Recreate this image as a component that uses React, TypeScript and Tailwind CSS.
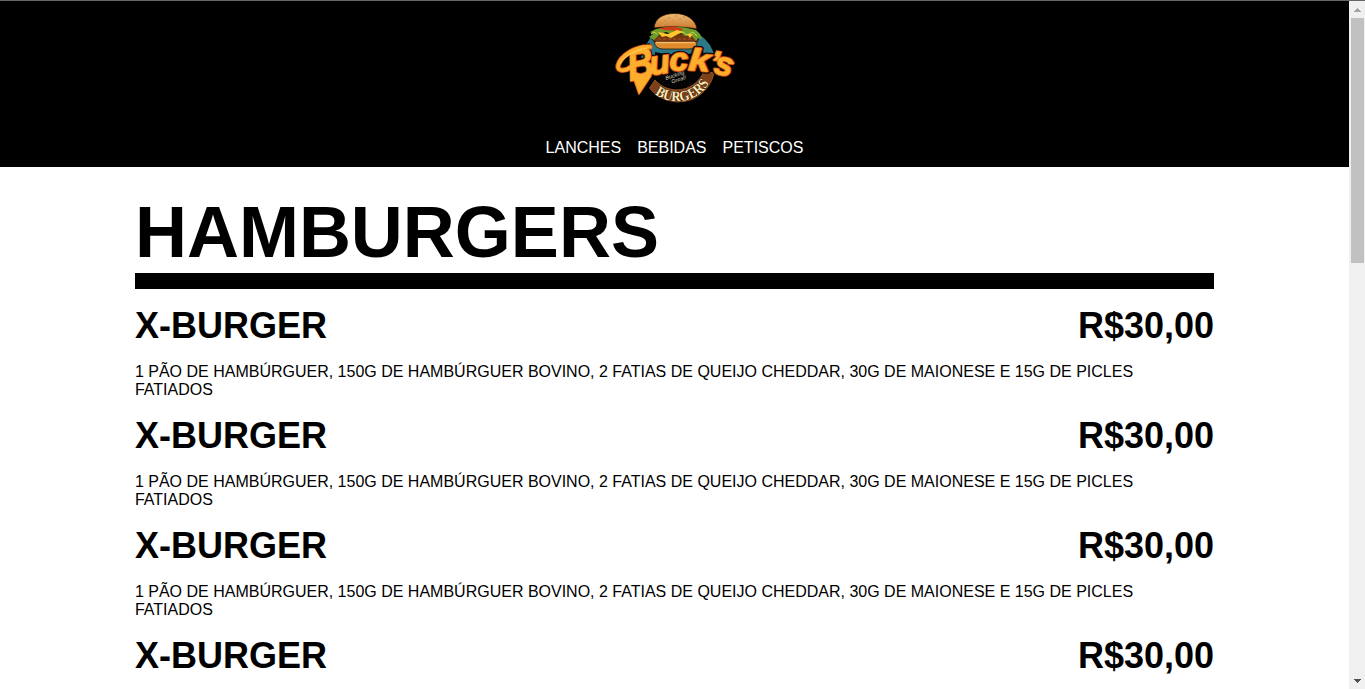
const links = ["LANCHES", "BEBIDAS", "PETISCOS"];

const description =
  "1 PÃO DE HAMBÚRGUER, 150G DE HAMBÚRGUER BOVINO, 2 FATIAS DE QUEIJO CHEDDAR, 30G DE MAIONESE E 15G DE PICLES FATIADOS";

const items = [
  { id: 1, name: "X-BURGER", price: "R$30,00", description },
  { id: 2, name: "X-BURGER", price: "R$30,00", description },
  { id: 3, name: "X-BURGER", price: "R$30,00", description },
  { id: 4, name: "X-BURGER", price: "R$30,00", description: "" },
];

const letters = [
  { c: "B", x: 25, y: 77, size: 44, rot: -10, sx: 0.82 },
  { c: "u", x: 46, y: 71, size: 33, rot: -8, sx: 1 },
  { c: "c", x: 65, y: 67, size: 32, rot: -4, sx: 1.05 },
  { c: "k", x: 83, y: 66, size: 31, rot: 4, sx: 1.25 },
  { c: "’", x: 104, y: 68, size: 31, rot: 8, sx: 1 },
  { c: "s", x: 108, y: 69, size: 33, rot: 12, sx: 1 },
];

const seeds = [
  [60, 17], [64, 14], [68, 17], [71, 12], [75, 15], [79, 13], [82, 17],
  [58, 21], [66, 20], [73, 20], [86, 20], [78, 19],
];

const swash = "M26 63 C21 67 12.5 68 13 62 C15 52 31 42 45 43";
const tail = "M26 67 L35 70 L46 72 L34 90 Z";

function Lettering({ strokeWidth }: { strokeWidth: number }) {
  return (
    <g strokeWidth={strokeWidth}>
      {letters.map((l) => (
        <text
          key={l.c}
          fontSize={l.size}
          transform={`translate(${l.x} ${l.y}) rotate(${l.rot}) scale(${l.sx} 1)`}
        >
          {l.c}
        </text>
      ))}
    </g>
  );
}

function Logo() {
  return (
    <svg
      width="140"
      height="110"
      viewBox="0 0 140 110"
      role="img"
      className="block"
      fontFamily="'Liberation Sans', Arial, sans-serif"
    >
      <defs>
        <linearGradient id="bun" x1="0" y1="0" x2="0" y2="1">
          <stop offset="0" stopColor="#f2bd72" />
          <stop offset="1" stopColor="#cc7627" />
        </linearGradient>
        <path id="ribbon" d="M50 90 A37.5 37.5 0 0 0 105.5 77" />
      </defs>

      <path d="M36 54 Q40 39 48 31 L95 31 Q107 39 110 54 Z" fill="#2d7886" />
      <path d="M50 48 Q72 54 98 47 L104 68 Q96 83 72 84 Q56 83 52 76 Z" fill="#050505" />
      <path d="M44.5 84 A36.5 36.5 0 0 0 109 69 L99 67 A29 29 0 0 1 50 76 Z" fill="#7d401a" stroke="#a65c28" strokeWidth="0.8" />

      <g stroke="#1a0c05" strokeWidth="0.7">
        <path d="M49 37 H92 V39 Q91 45 83 45 H58 Q50 45 49 37Z" fill="#e08a2e" />
        <path d="M48 32 Q70 27 92 32 Q96 38 89 38 H52 Q45 37 48 32Z" fill="#743711" />
        <path d="M49 24 C50 14 58 9.5 70 9.5 C82 9.5 91 16 92 25 Q71 21 49 24Z" fill="url(#bun)" />
      </g>
      <path d="M51 38.5 H90" stroke="#f7bd65" strokeWidth="1.3" />
      <path d="M51 25 Q71 20 91 26 L95 30 L97 35 L93 34 L91 37 L86 31 L80 32 L76 29 L68 31 L61 28 L54 31 L49 36 L44 33 L48 30 L45 28Z" fill="#709c29" />
      <path d="M46 30 L49 28 L52 30 M78 28 L82 31 L88 28 L92 32" fill="none" stroke="#c0d453" strokeWidth="1" />
      <path d="M54 24 L68 22.5 L78 25 L76 27 L59 26Z" fill="#cf3a18" />
      <path d="M53 28 L63 30 L72 26 L79 28 L73 30 L66 34 L61 32 L57 33Z M82 30 L88 30 L85 34Z" fill="#ffc72e" />
      <path d="M53 35 H88" stroke="#a85620" strokeWidth="1.2" strokeDasharray="3 2" />
      {seeds.map(([x, y]) => (
        <ellipse key={`${x}-${y}`} cx={x} cy={y} rx="1.1" ry="0.7" fill="#ffe8b4" stroke="#8f521d" strokeWidth="0.4" />
      ))}

      <g fontWeight="700" fontStyle="italic" fill="none" stroke="#050505" strokeLinejoin="round" aria-hidden="true">
        <path d={swash} strokeWidth="7" />
        <path d={tail} strokeWidth="4" />
        <Lettering strokeWidth={4.6} />
      </g>
      <g fontWeight="700" fontStyle="italic" fill="none" stroke="#dc5216" strokeLinejoin="round" strokeLinecap="round" aria-hidden="true">
        <path d={swash} strokeWidth="5.4" />
        <path d={tail} strokeWidth="1.8" />
        <path d="M119 56 L128 59" strokeWidth="3.6" />
        <Lettering strokeWidth={2.4} />
      </g>
      <g fontWeight="700" fontStyle="italic" fill="#fdae2c" stroke="#fdae2c" strokeLinejoin="round" strokeLinecap="round">
        <path d={swash} fill="none" strokeWidth="3.6" />
        <path d={tail} strokeWidth="0.2" />
        <path d="M119 56 L128 59" strokeWidth="1.8" />
        <Lettering strokeWidth={0.6} />
      </g>
      <path d="M15 60 C20 51 32 46 42 44" fill="none" stroke="#ffd466" strokeWidth="0.9" />

      <g fill="#d5d2bd" fontSize="5.5" fontStyle="italic">
        <text x="61" y="76" transform="rotate(-18 61 76)">Bucking</text>
        <text x="67" y="79.5" transform="rotate(-18 67 79.5)">Great!</text>
      </g>
      <text fill="#f9ebb8" stroke="#2b1208" strokeWidth="0.8" paintOrder="stroke" fontFamily="'Liberation Serif', serif" fontWeight="700" fontSize="14.5">
        <textPath href="#ribbon" textLength="62" lengthAdjust="spacingAndGlyphs">
          BURGERS
        </textPath>
      </text>
    </svg>
  );
}

function Scrollbar() {
  return (
    <div className="flex w-4 shrink-0 flex-col justify-between bg-[#f0f0f0] pb-1">
      <div className="flex flex-col">
        <svg width="16" height="17" viewBox="0 0 16 17" shapeRendering="crispEdges">
          <path d="M8 7h1v1h1v1h1v1h1v1H5v-1h1V9h1V8h1z" fill="#a3a3a3" />
        </svg>
        <div className="ml-0.5 h-[245px] w-[13px] bg-[#c1c1c1]" />
      </div>
      <svg width="16" height="8" viewBox="0 0 16 8" shapeRendering="crispEdges">
        <path d="M5 2h7v1h-1v1h-1v1H9v1H8V5H7V4H6V3H5z" fill="#505050" />
      </svg>
    </div>
  );
}

export default function App() {
  return (
    <div className="flex h-[689px] w-full flex-col overflow-hidden border-t border-[#666666] bg-white font-['Liberation_Sans',Arial,sans-serif] text-black">
      <div className="flex min-h-0 flex-1">
        <div className="min-w-0 flex-1 overflow-hidden">
          <header className="flex h-[166px] flex-col items-center bg-black pt-[3px] text-white">
            <Logo />
            <nav className="mt-[25px] flex gap-4 text-base leading-[18px]">
              {links.map((link) => (
                <a key={link} href="#">
                  {link}
                </a>
              ))}
            </nav>
          </header>
          <main className="mx-auto w-4/5 pt-6">
            <h1 className="h-[82px] text-[72px] leading-[82px] font-bold">HAMBURGERS</h1>
            <div className="h-4 bg-black" />
            {items.map((item) => (
              <article key={item.id} className="h-[110px] pt-4">
                <div className="flex justify-between text-4xl leading-[41px] font-bold">
                  <h2>{item.name}</h2>
                  <span>{item.price}</span>
                </div>
                {item.description && (
                  <p className="mt-[17px] text-base leading-[18px]">{item.description}</p>
                )}
              </article>
            ))}
          </main>
        </div>
        <Scrollbar />
      </div>
    </div>
  );
}
